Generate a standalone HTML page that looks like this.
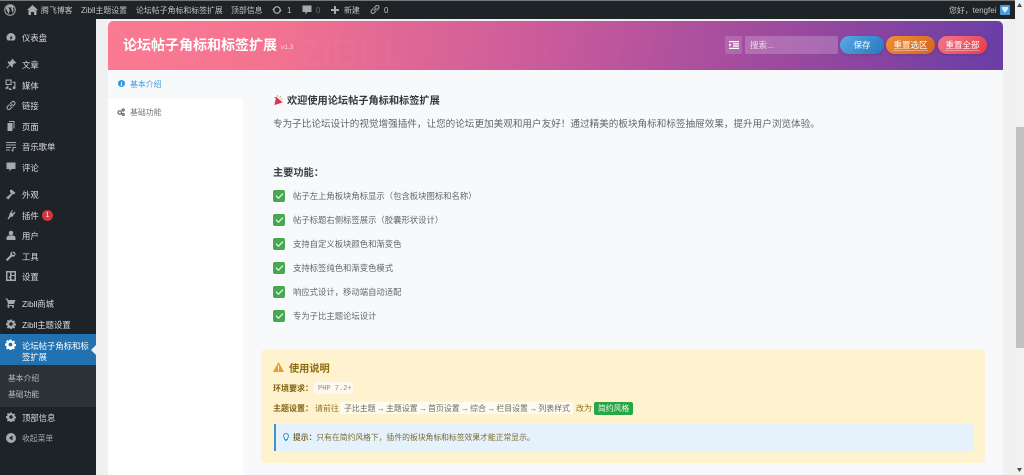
<!DOCTYPE html>
<html lang="zh"><head><meta charset="utf-8"><title>论坛帖子角标和标签扩展</title>
<style>
*{box-sizing:border-box}
html,body{margin:0;padding:0;width:1024px;height:475px;overflow:hidden;background:#f0f0f1;font-family:"Liberation Sans","Noto Sans CJK SC",sans-serif}
.a{position:absolute;white-space:nowrap;line-height:14px}
svg{position:absolute;display:block}
.bar{color:#c3c4c7;font-size:7.9px;top:4px;line-height:14px}
.m{left:22px;color:#dcdddf;font-size:8.35px}
.ic{fill:#a7aaad}
.li{left:293px;font-size:8.35px;color:#60666e}
.ck{position:absolute;left:273px;width:12px;height:12px;background:#46a84f;border-radius:2px}
.ck:after{content:"";position:absolute;left:3px;top:3px;width:6px;height:3px;border-left:1.6px solid #fff;border-bottom:1.6px solid #fff;transform:rotate(-45deg)}
.btn{position:absolute;top:36px;height:18px;border-radius:9px;color:#fff;font-size:8.5px;line-height:18px;text-align:center}
</style></head><body>
<svg width="0" height="0"><defs>
<symbol id="gear" viewBox="0 0 20 20"><path d="M8.3 1h3.4l.5 2.5 1.6.7 2.2-1.4 2.2 2.3-1.4 2.1.7 1.6 2.5.5v3.4l-2.5.5-.7 1.6 1.4 2.2-2.3 2.2-2.1-1.4-1.6.7-.5 2.5H8.3l-.5-2.5-1.6-.7-2.2 1.4-2.2-2.3 1.4-2.1-.7-1.6L0 11.700V8.300l2.500-.5.7-1.600L1.800 4 4.100 1.800l2.100 1.400 1.600-.7zM10 6.500a3.500 3.500 0 100 7 3.500 3.500 0 000-7z" fill-rule="evenodd"/></symbol>
</defs></svg>

<!-- content -->
<div style="position:absolute;left:108px;top:21px;width:895px;height:454px;background:#f8f9fb"></div>
<div style="position:absolute;left:108px;top:21px;width:895px;height:49px;border-radius:5px 5px 0 0;background:linear-gradient(100deg,#fb7a93 0%,#f4738f 18%,#c85a9c 50%,#93479f 80%,#693ea6 100%);overflow:hidden">
<div class="a" style="left:190px;top:12px;font-size:38px;font-weight:700;color:rgba(255,255,255,.025);line-height:42px">ZIBLL</div>
</div>
<div class="a" style="left:123px;top:36px;font-size:14px;line-height:18px;font-weight:700;color:#fff">论坛帖子角标和标签扩展</div>
<div class="a" style="left:281px;top:43px;font-size:6.500px;line-height:10px;color:#fbdfe6">v1.3</div>

<div style="position:absolute;left:725px;top:36px;width:17px;height:18px;border-radius:2px;background:rgba(255,255,255,.15)"></div>
<svg style="left:729px;top:41px" width="10" height="8" viewBox="0 0 10 8"><path d="M0 0h10v1.300H0zM4 2.200h6v1.300H4zM4 4.400h6v1.300H4zM0 6.700h10V8H0zM0 2.200l2.600 1.700L0 5.700z" fill="#fff"/></svg>
<div style="position:absolute;left:745px;top:36px;width:93px;height:18px;border-radius:2px;background:rgba(255,255,255,.2)"></div>
<div class="a" style="left:750px;top:38px;font-size:8.500px;color:#f2dcec">搜索...</div>
<div class="btn" style="left:840px;width:44px;background:linear-gradient(135deg,#5aa9e6,#2478bd);box-shadow:0 1px 3px rgba(0,0,0,.15)">保存</div>
<div class="btn" style="left:886px;width:49px;background:linear-gradient(135deg,#f09135,#d4641f);box-shadow:0 1px 3px rgba(0,0,0,.15)"><span style="border-bottom:1px solid rgba(255,255,255,.35)">重置选区</span></div>
<div class="btn" style="left:938px;width:49px;background:linear-gradient(135deg,#f4778b,#ea3a47);box-shadow:0 1px 3px rgba(0,0,0,.15)"><span style="border-bottom:1px solid rgba(255,255,255,.35)">重置全部</span></div>

<!-- tabs -->
<div style="position:absolute;left:108px;top:98px;width:135px;height:377px;background:#fff"></div>
<svg style="left:118px;top:80px" width="7" height="7" viewBox="0 0 14 14"><circle cx="7" cy="7" r="7" fill="#2f95d8"/><path d="M6 3h2v2H6zM5.500 6H8v4h1v1.300H5v-1.300h1V7.300h-.5z" fill="#fff"/></svg>
<div class="a" style="left:130px;top:78px;font-size:7.900px;color:#3b9bdc">基本介绍</div>
<svg style="left:117px;top:108px" width="8" height="8" viewBox="0 0 16 16"><g fill="none" stroke="#6b7075" stroke-width="2.600"><circle cx="5.500" cy="9" r="3.500"/><circle cx="12.500" cy="4" r="2"/><circle cx="12.500" cy="13" r="2"/></g></svg>
<div class="a" style="left:130px;top:106px;font-size:7.900px;color:#73787e">基础功能</div>

<!-- welcome -->
<svg style="left:273px;top:95px" width="11" height="11" viewBox="0 0 11 12"><path d="M3 2l7 6-9 3z" fill="#d8344b"/><path d="M4 0l1 2M8 1L7 3M10 4L8 5" stroke="#d89a4a" stroke-width="1" fill="none"/><circle cx="2" cy="3" r=".8" fill="#4a8fd8"/></svg>
<div class="a" style="left:287px;top:95px;font-size:10.200px;font-weight:700;color:#33383d">欢迎使用论坛帖子角标和标签扩展</div>
<div class="a" style="left:273px;top:118px;font-size:9.600px;color:#60666e">专为子比论坛设计的视觉增强插件，让您的论坛更加美观和用户友好！通过精美的板块角标和标签抽屉效果，提升用户浏览体验。</div>
<div class="a" style="left:273px;top:167px;font-size:10.200px;font-weight:700;color:#3a3f44">主要功能：</div>

<div class="ck" style="top:190px"></div><div class="a li" style="top:189px">帖子左上角板块角标显示（包含板块图标和名称）</div>
<div class="ck" style="top:214px"></div><div class="a li" style="top:213px">帖子标题右侧标签展示（胶囊形状设计）</div>
<div class="ck" style="top:238px"></div><div class="a li" style="top:237px">支持自定义板块颜色和渐变色</div>
<div class="ck" style="top:262px"></div><div class="a li" style="top:261px">支持标签纯色和渐变色模式</div>
<div class="ck" style="top:286px"></div><div class="a li" style="top:285px">响应式设计，移动端自动适配</div>
<div class="ck" style="top:310px"></div><div class="a li" style="top:309px">专为子比主题论坛设计</div>

<!-- notice -->
<div style="position:absolute;left:261px;top:349px;width:724px;height:114px;border-radius:5px;background:#fff2cf"></div>
<svg style="left:273px;top:362px" width="11" height="10" viewBox="0 0 11 10"><path d="M5.500 0L11 10H0z" fill="#ed9c1c"/><path d="M5 3.500h1V7H5zM5 7.800h1V9H5z" fill="#fff"/></svg>
<div class="a" style="left:289px;top:363px;font-size:10.200px;font-weight:700;color:#8d6b12">使用说明</div>
<div class="a" style="left:273px;top:382px;font-size:8px;font-weight:700;color:#7f6210">环境要求：</div>
<div style="position:absolute;left:314px;top:382px;width:39px;height:12px;border-radius:2px;background:#fdf9ef"></div>
<div class="a" style="left:318px;top:382px;font-size:7px;font-family:'Liberation Mono',monospace;color:#8a8a85">PHP 7.2+</div>
<div class="a" style="left:273px;top:402px;font-size:8px;font-weight:700;color:#7f6210">主题设置：</div>
<div class="a" style="left:315px;top:402px;font-size:8px;color:#8f7420">请前往</div>
<div style="position:absolute;left:340px;top:402px;width:233px;height:12px;border-radius:2px;background:#fdfaf1"></div>
<div class="a" style="left:344px;top:402px;font-size:7.900px;word-spacing:-.9px;color:#6f6a55">子比主题 → 主题设置 → 首页设置 → 综合 → 栏目设置 → 列表样式</div>
<div class="a" style="left:576px;top:402px;font-size:8px;color:#8f7420">改为</div>
<div style="position:absolute;left:594px;top:402px;width:39px;height:13px;border-radius:2px;background:#28a745"></div>
<div class="a" style="left:598px;top:402px;font-size:7.800px;color:#eafbe9">简约风格</div>
<div style="position:absolute;left:274px;top:424px;width:699px;height:27px;background:#e5f2fc;border-left:2.500px solid #3f92d2"></div>
<svg style="left:283px;top:433px" width="6" height="9" viewBox="0 0 6 9"><path d="M3 .5a2.500 2.500 0 011.500 4.500v1.500h-3V5A2.500 2.500 0 013 .5zM2 7.500h2" fill="none" stroke="#4b9fd8" stroke-width="1"/></svg>
<div class="a" style="left:293px;top:431px;font-size:7.800px;color:#7c6a32"><b>提示：</b>只有在简约风格下，插件的板块角标和标签效果才能正常显示。</div>

<!-- sidebar -->
<div style="position:absolute;left:0;top:19px;width:96px;height:456px;background:#1d2327"></div>
<div style="position:absolute;left:0;top:334px;width:96px;height:31px;background:#2271b1"></div>
<div style="position:absolute;left:0;top:365px;width:96px;height:42px;background:#2c3338"></div>
<svg style="left:91px;top:345px" width="5" height="10" viewBox="0 0 5 10"><path d="M5 0v10L0 5z" fill="#f0f0f1"/></svg>

<svg class="ic" style="left:6px;top:32px" width="10" height="10" viewBox="0 0 20 20"><path d="M10 2a9 9 0 00-9 9c0 2.500 1 4.500 2.500 6h13C18 15.500 19 13.500 19 11a9 9 0 00-9-9zm0 6.500a2.500 2.500 0 012.300 3.500L9 16l-.5-4.500A2.500 2.500 0 0110 8.500z" fill-rule="evenodd"/></svg>
<div class="a m" style="top:31px">仪表盘</div>
<svg class="ic" style="left:6px;top:58px" width="11" height="11" viewBox="0 0 20 20"><path d="M11 1l8 8-2 1-1-1-4 4 1 3-2 1-4-4-5 6-1-1 5-6-3-4 1-2 3 1 4-4-1-1z"/></svg>
<div class="a m" style="top:58px">文章</div>
<svg class="ic" style="left:5px;top:79px" width="11" height="11" viewBox="0 0 20 20"><path d="M1 1h11v10H1zm2 2v6h7V3zM14 5h5v11a2.500 2.500 0 11-2-2.400V7h-3zM6 12v4l4 1a2.500 2.500 0 11-2 .5L5 16.500a2 2 0 11-1-1.700V12z" fill-rule="evenodd"/></svg>
<div class="a m" style="top:79px">媒体</div>
<svg style="left:6px;top:100px" width="10" height="11" viewBox="0 0 20 20"><path d="M8 12l5-5M7 8L3 12a3.500 3.500 0 005 5l4-4M13 12l4-4a3.500 3.500 0 00-5-5L8 7" fill="none" stroke="#a7aaad" stroke-width="2.200"/></svg>
<div class="a m" style="top:99px">链接</div>
<svg class="ic" style="left:6px;top:121px" width="10" height="10" viewBox="0 0 20 20"><path d="M6 0h11v15h-2V2H6zM3 4h10v16H3z"/></svg>
<div class="a m" style="top:120px">页面</div>
<svg class="ic" style="left:6px;top:141px" width="10" height="11" viewBox="0 0 20 20"><path d="M0 1h20v2H0zM0 6h20v2H0zM0 11h10v2H0zM0 16h8v2H0zM13 11h7v2h-5v5a2 2 0 11-2-2z"/></svg>
<div class="a m" style="top:140px">音乐歌单</div>
<svg class="ic" style="left:6px;top:162px" width="10" height="10" viewBox="0 0 20 20"><path d="M1 1h18v13h-8l-4 5v-5H1z"/></svg>
<div class="a m" style="top:161px">评论</div>
<svg class="ic" style="left:5px;top:189px" width="11" height="11" viewBox="0 0 20 20"><path d="M9 2l3-1 7 6-3 3-2-1-8 10-4-3 9-8-2-3z"/></svg>
<div class="a m" style="top:188px">外观</div>
<svg class="ic" style="left:6px;top:209px" width="10" height="11" viewBox="0 0 20 20"><path d="M12 1l2 1-3 4 3 2 3-4 2 2-4 5-1 3-5 1-4 5-2-2 3-4 1-5z"/></svg>
<div class="a m" style="top:209px">插件</div>
<div style="position:absolute;left:42px;top:210px;width:11px;height:11px;border-radius:50%;background:#d63638;color:#fff;font-size:7px;line-height:11px;text-align:center">1</div>
<svg class="ic" style="left:6px;top:230px" width="10" height="11" viewBox="0 0 20 20"><circle cx="10" cy="5" r="4.500"/><path d="M1 19v-4c0-3 3-5 5-5h8c2 0 5 2 5 5v4z"/></svg>
<div class="a m" style="top:229px">用户</div>
<svg class="ic" style="left:6px;top:251px" width="10" height="10" viewBox="0 0 20 20"><path d="M14 1a5 5 0 015 6l-3-1-1-2-1-2zM13 1l-1 5 2 2 5-1a5 5 0 01-7 4L4 19a2 2 0 01-3-3l8-8a5 5 0 014-7z"/></svg>
<div class="a m" style="top:250px">工具</div>
<svg class="ic" style="left:6px;top:271px" width="10" height="10" viewBox="0 0 20 20"><path d="M0 0h20v20H0zm3 3v14h5v-3H6v-3h2V3zm8 0v5h6V3zm0 7v7h6v-7z" fill-rule="evenodd"/></svg>
<div class="a m" style="top:270px">设置</div>
<svg class="ic" style="left:5px;top:298px" width="11" height="10" viewBox="0 0 20 20"><path d="M0 1h4l1 3h15l-3 8H7l-1 2h11v2H3l2-4L2.500 3H0z"/><circle cx="6" cy="18" r="2"/><circle cx="15" cy="18" r="2"/></svg>
<div class="a m" style="top:297px">Zibll商城</div>
<svg class="ic" style="left:6px;top:319px" width="10" height="10"><use href="#gear"/></svg>
<div class="a m" style="top:318px">Zibll主题设置</div>
<svg style="left:5px;top:339px;fill:#fff" width="11" height="11"><use href="#gear"/></svg>
<div class="a m" style="top:339px;color:#fff">论坛帖子角标和标</div>
<div class="a m" style="top:350px;color:#fff">签扩展</div>
<div class="a" style="left:8px;top:372px;font-size:7.800px;color:#b4b9be">基本介绍</div>
<div class="a" style="left:8px;top:388px;font-size:7.800px;color:#b4b9be">基础功能</div>
<svg class="ic" style="left:6px;top:412px" width="10" height="10"><use href="#gear"/></svg>
<div class="a m" style="top:411px">顶部信息</div>
<svg style="left:6px;top:433px" width="10" height="10" viewBox="0 0 20 20"><circle cx="10" cy="10" r="10" fill="#a7aaad"/><path d="M13 5v10L6 10z" fill="#1d2327"/></svg>
<div class="a" style="left:22px;top:432px;font-size:7.800px;color:#a7aaad">收起菜单</div>

<!-- admin bar -->
<div style="position:absolute;left:0;top:0;width:1015px;height:19px;background:#1d2327"></div>
<div style="position:absolute;left:0;top:0;width:1015px;height:1px;background:#777"></div>
<svg style="left:4px;top:4px" width="12" height="12" viewBox="0 0 24 24"><circle cx="12" cy="12" r="10.500" fill="none" stroke="#a7aaad" stroke-width="2"/><path d="M4 9l5 11 2.500-7L9.500 8h-1V7h7v1h-1.500l3.500 10 1.500-5c.8-2.500-1-3-1-4.500 0-1.500 1-2 2-2.200A9 9 0 004 8.500z" fill="#a7aaad"/></svg>
<svg style="left:27px;top:5px" width="11" height="10" viewBox="0 0 22 20"><path d="M11 0l11 10h-3v10h-5v-6H8v6H3V10H0z" fill="#a7aaad"/></svg>
<div class="a bar" style="left:41px">腾飞博客</div>
<div class="a bar" style="left:81px">Zibll主题设置</div>
<div class="a bar" style="left:136px">论坛帖子角标和标签扩展</div>
<div class="a bar" style="left:231px">顶部信息</div>
<svg style="left:272px;top:5px" width="10" height="10" viewBox="0 0 20 20"><circle cx="10" cy="10" r="6.500" fill="none" stroke="#a7aaad" stroke-width="2.600"/><path d="M0 10l3-3 3 3zM20 10l-3 3-3-3z" fill="#a7aaad"/></svg>
<div class="a bar" style="left:287px">1</div>
<svg style="left:302px;top:5px" width="10" height="10" viewBox="0 0 20 20"><path d="M1 1h18v13h-8l-4 5v-5H1z" fill="#a7aaad"/></svg>
<div class="a bar" style="left:316px;color:#6b7075">0</div>
<svg style="left:331px;top:6px" width="8" height="8" viewBox="0 0 8 8"><path d="M3 0h2v3h3v2H5v3H3V5H0V3h3z" fill="#a7aaad"/></svg>
<div class="a bar" style="left:344px">新建</div>
<svg style="left:370px;top:4px" width="10" height="11" viewBox="0 0 20 20"><path d="M8 12l5-5M7 8L3 12a3.500 3.500 0 005 5l4-4M13 12l4-4a3.500 3.500 0 00-5-5L8 7" fill="none" stroke="#a7aaad" stroke-width="2"/></svg>
<div class="a bar" style="left:384px">0</div>
<div class="a bar" style="left:949px">您好，tengfei</div>
<div style="position:absolute;left:1000px;top:5px;width:10px;height:10px;background:#4c9ad9;border-radius:1px"></div>
<svg style="left:1002px;top:7px" width="6" height="6" viewBox="0 0 6 6"><path d="M0 0h6v2L3 6 0 2z" fill="#d8ecfb"/></svg>

<!-- scrollbar -->
<div style="position:absolute;left:1015px;top:0;width:9px;height:475px;background:#f1f1f1"></div>
<div style="position:absolute;left:1016px;top:127px;width:8px;height:221px;background:#c1c1c1"></div>
<svg style="left:1017px;top:3px" width="5" height="4" viewBox="0 0 5 4"><path d="M2.500 0L5 4H0z" fill="#505050"/></svg>
<svg style="left:1017px;top:468px" width="5" height="4" viewBox="0 0 5 4"><path d="M0 0h5L2.500 4z" fill="#505050"/></svg>
</body></html>
